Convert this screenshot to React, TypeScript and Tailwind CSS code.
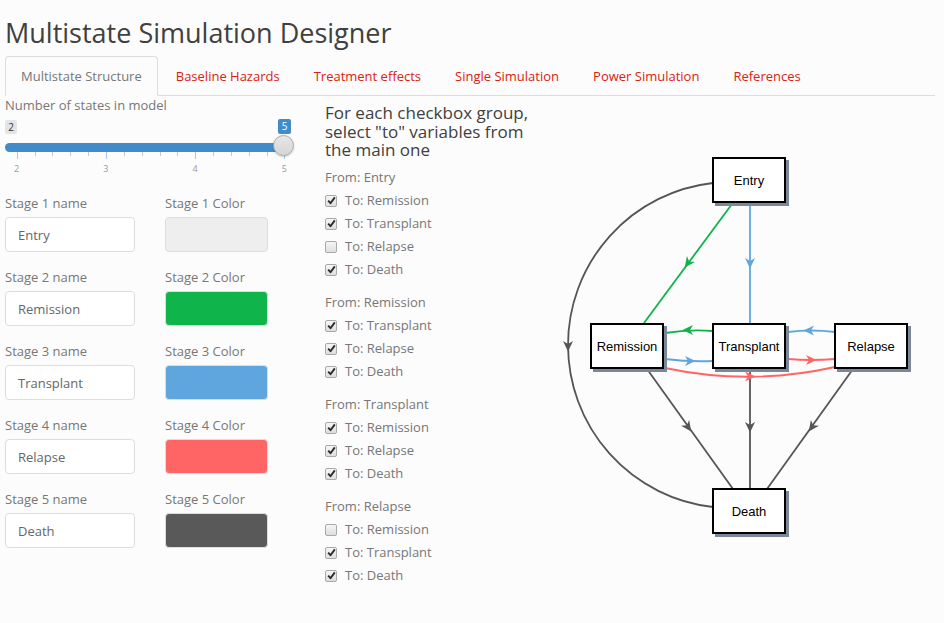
import React from 'react';

const tabs = ['Multistate Structure', 'Baseline Hazards', 'Treatment effects', 'Single Simulation', 'Power Simulation', 'References'];

const stages = [
  { name: 'Entry', color: '#eeeeee' },
  { name: 'Remission', color: '#0fb54b' },
  { name: 'Transplant', color: '#5fa6df' },
  { name: 'Relapse', color: '#ff6565' },
  { name: 'Death', color: '#595959' },
];

const groups = [
  { from: 'Entry', to: [['Remission', true], ['Transplant', true], ['Relapse', false], ['Death', true]] },
  { from: 'Remission', to: [['Transplant', true], ['Relapse', true], ['Death', true]] },
  { from: 'Transplant', to: [['Remission', true], ['Relapse', true], ['Death', true]] },
  { from: 'Relapse', to: [['Remission', false], ['Transplant', true], ['Death', true]] },
] as { from: string; to: [string, boolean][] }[];

const Checkbox = ({ checked }: { checked: boolean }) => (
  <span className="w-[12px] h-[12px] rounded-[2px] border border-[#a9a9a9] bg-gradient-to-b from-[#f6f6f6] to-[#dedede] flex items-center justify-center shrink-0">
    {checked && (
      <svg width="9" height="9" viewBox="0 0 9 9">
        <path d="M1.2 4.6 L3.5 7.2 L7.8 1.4" fill="none" stroke="#2b2b2b" strokeWidth="1.9" strokeLinejoin="round" />
      </svg>
    )}
  </span>
);

const Slider = () => {
  const ticks = Array.from({ length: 16 }, (_, i) => 11.7 + i * 17.85);
  return (
    <div className="relative h-[80px] w-[300px]">
      <span className="absolute left-0 top-[6px] h-[14px] w-[12px] rounded-[2px] bg-[#e1e4e9] text-[10px] leading-[14px] text-center text-[#333]">2</span>
      <span className="absolute left-[273px] top-[5px] h-[15px] w-[13px] rounded-[2px] bg-[#428bca] text-[10px] leading-[15px] text-center text-white">5</span>
      <div className="absolute left-0 top-[29px] h-[9px] w-[282px] rounded-full bg-[#428bca]" />
      {ticks.map((x, i) => (
        <div
          key={i}
          className={`absolute top-[38px] w-px ${i % 5 === 0 ? 'h-[7px] bg-[#a9c7e6]' : 'h-[4px] bg-[#c8c8c8]'}`}
          style={{ left: x }}
        />
      ))}
      {['2', '3', '4', '5'].map((t, i) => (
        <span key={t} className="absolute top-[49px] w-[10px] -ml-[5px] text-center text-[9px] leading-[12px] text-[#999]" style={{ left: ticks[i * 5] }}>
          {t}
        </span>
      ))}
      <div className="absolute left-[268px] top-[21px] h-[21px] w-[21px] rounded-full border border-[#a8a8a8] bg-gradient-to-b from-[#e6e6e6] to-[#d6d6d6] shadow-[0_1px_2px_rgba(0,0,0,0.2)]" />
    </div>
  );
};

const Arrow = ({ x, y, a, c }: { x: number; y: number; a: number; c: string }) => (
  <polygon points="5.5,0 -5,-5 -2,0 -5,5" fill={c} transform={`translate(${x} ${y}) rotate(${a})`} />
);

const Node = ({ x, y, label }: { x: number; y: number; label: string }) => (
  <g>
    <rect x={x + 3} y={y + 3} width={74} height={46} fill="#7b8899" />
    <rect x={x + 1} y={y + 1} width={72} height={44} fill="#fff" stroke="#000" strokeWidth="2" />
    <text x={x + 37} y={y + 28} textAnchor="middle" fontSize="13" fontFamily="'Liberation Sans', Arial, sans-serif" fill="#000">
      {label}
    </text>
  </g>
);

const Diagram = () => {
  const G = '#10b34b';
  const B = '#5fa6df';
  const R = '#ff6565';
  const D = '#555555';
  return (
    <svg width="379" height="500" viewBox="560 96 379 500">
      <g fill="none" strokeWidth="1.8">
        <path d="M713 183 A163 163 0 0 0 713 507" stroke={D} />
        <path d="M732 204 L644 323" stroke={G} />
        <path d="M750 204 L750 323" stroke={B} />
        <path d="M713 331 Q689 329 665 333" stroke={G} />
        <path d="M665 359 Q689 362 713 361" stroke={B} />
        <path d="M835 332 Q811 329 788 332" stroke={B} />
        <path d="M788 359 Q811 361 835 359" stroke={R} />
        <path d="M665 368 Q750 386 835 367" stroke={R} />
        <path d="M647 369 L733 489" stroke={D} />
        <path d="M750 369 L750 489" stroke={D} />
        <path d="M853 369 L767 489" stroke={D} />
      </g>
      <Arrow x={568} y={346} a={90} c={D} />
      <Arrow x={688} y={263} a={126.5} c={G} />
      <Arrow x={750} y={263} a={90} c={B} />
      <Arrow x={688} y={330} a={180} c={G} />
      <Arrow x={690} y={361} a={0} c={B} />
      <Arrow x={809} y={330.5} a={180} c={B} />
      <Arrow x={811} y={360} a={0} c={R} />
      <Arrow x={750} y={376.5} a={0} c={R} />
      <Arrow x={688} y={427} a={54.4} c={D} />
      <Arrow x={750} y={427} a={90} c={D} />
      <Arrow x={812} y={427} a={125.6} c={D} />
      <Node x={712} y={157} label="Entry" />
      <Node x={590} y={323} label="Remission" />
      <Node x={712} y={323} label="Transplant" />
      <Node x={834} y={323} label="Relapse" />
      <Node x={712} y={488} label="Death" />
    </svg>
  );
};

const App = () => {
  return (
    <div className="min-h-screen bg-[#fcfcfc] px-[5px] font-['Open_Sans',sans-serif] text-[#777]">
      <h2 className="pt-[18px] text-[27px] leading-[30px] text-[#404040]">Multistate Simulation Designer</h2>
      <ul className="mt-[8px] mr-[4px] flex border-b border-[#dddddd]">
        {tabs.map((t, i) => (
          <li key={t} className="-mb-px mr-[2px]">
            <a
              className={`block px-[15px] py-[10px] text-[13px] leading-[18px] rounded-t-[4px] border ${
                i === 0 ? 'border-[#dddddd] border-b-transparent bg-[#fcfcfc] text-[#777]' : 'border-transparent text-[#d9230f]'
              }`}
            >
              {t}
            </a>
          </li>
        ))}
      </ul>

      <div className="flex">
        <div className="w-[320px]">
          <div className="text-[13px] leading-[18px]">Number of states in model</div>
          <Slider />
          {stages.map((s, i) => (
            <div key={s.name} className="flex mb-[16px]">
              <div className="w-[160px]">
                <div className="text-[13px] leading-[18px]">Stage {i + 1} name</div>
                <div className="mt-[5px] h-[35px] w-[130px] rounded-[4px] border border-[#dddddd] bg-white px-[12px] text-[13px] leading-[34px] text-[#666]">
                  {s.name}
                </div>
              </div>
              <div>
                <div className="text-[13px] leading-[18px]">Stage {i + 1} Color</div>
                <div className="mt-[5px] h-[35px] w-[103px] rounded-[4px] border border-[#dddddd]" style={{ backgroundColor: s.color }} />
              </div>
            </div>
          ))}
        </div>

        <div className="w-[235px]">
          <div className="mt-[8px] w-[208px] text-[17px] leading-[18.7px] text-[#404040]">
            For each checkbox group, select "to" variables from the main one
          </div>
          <div className="mt-[8px]">
            {groups.map((g) => (
              <div key={g.from} className="mb-[12px]">
                <div className="text-[13px] leading-[18px]">From: {g.from}</div>
                <div className="mt-[3px]">
                  {g.to.map(([name, on]) => (
                    <div key={name} className="flex h-[23px] items-center gap-[8px] text-[13px]">
                      <Checkbox checked={on} />
                      <span>To: {name}</span>
                    </div>
                  ))}
                </div>
              </div>
            ))}
          </div>
        </div>

        <div className="flex-1">
          <Diagram />
        </div>
      </div>
    </div>
  );
};

export default App;
